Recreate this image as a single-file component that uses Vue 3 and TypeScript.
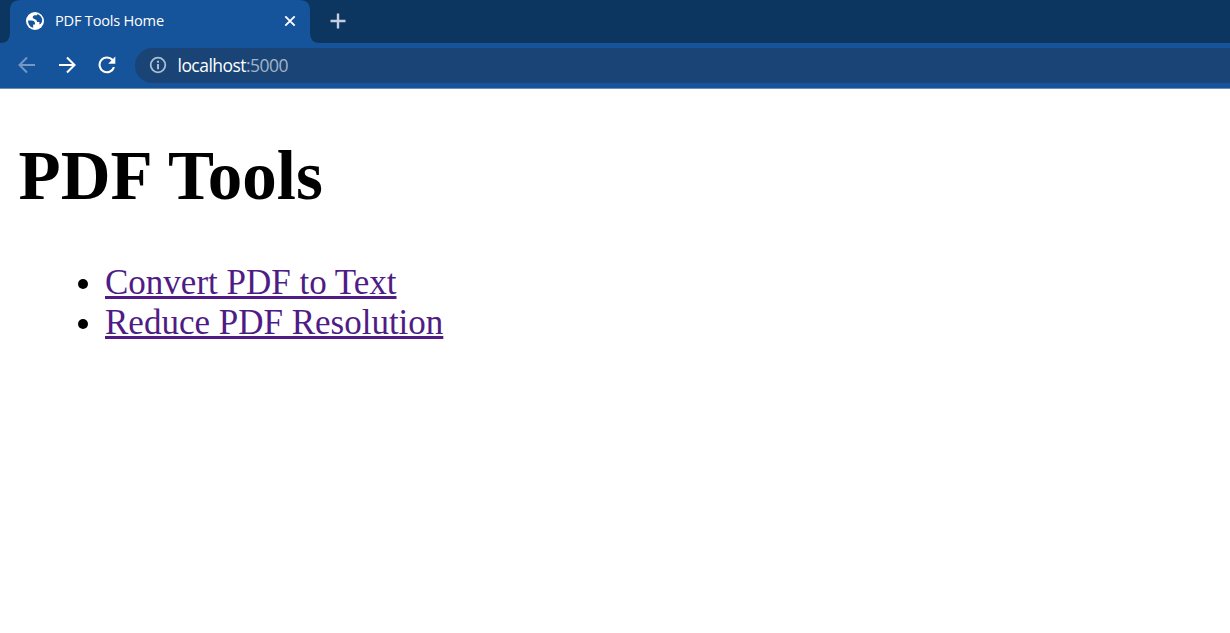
<script setup lang="ts">
interface ToolLink {
  label: string
  href: string
}

const tabTitle = 'PDF Tools Home'
const heading = 'PDF Tools'
const host = 'localhost'
const port = ':5000'

const tools: ToolLink[] = [
  { label: 'Convert PDF to Text', href: '#convert' },
  { label: 'Reduce PDF Resolution', href: '#reduce' },
]
</script>

<template>
  <div class="browser">
    <div class="tab-strip">
      <div class="left-edge"></div>
      <div class="tab">
        <svg class="globe" width="20" height="20" viewBox="0 0 20 20">
          <circle cx="10" cy="10" r="9" fill="#fff" />
          <path
            d="M3 9.4 H6.6 Q9.8 9.6 10 12.2 V13.4 H8.2 V16.8 Q3 15.4 3 9.4Z M12.2 3 V4.2 H9.6 Q7.8 4.7 7.6 6.2 Q7.8 7.9 10 8.2 Q12 8.6 12.2 11 H14.4 V13.6 Q17.6 12 17.1 8.2 Q16 4.2 12.2 3Z"
            fill="#15539a"
          />
        </svg>
        <span class="tab-title">{{ tabTitle }}</span>
        <svg class="close" width="12" height="12" viewBox="0 0 12 12">
          <path d="M1.3 1.3 10.7 10.7M10.7 1.3 1.3 10.7" stroke="#fff" stroke-width="1.9" />
        </svg>
      </div>
      <div class="strip-rest">
        <svg width="16" height="16" viewBox="0 0 16 16">
          <path d="M8 .5V15.5M.5 8H15.5" stroke="#c3cfe0" stroke-width="2.4" />
        </svg>
      </div>
    </div>

    <div class="toolbar">
      <svg class="nav" width="18" height="18" viewBox="0 0 18 18">
        <path d="M17 9H2M9 1.5 1.5 9 9 16.5" fill="none" stroke="#7398c4" stroke-width="2" />
      </svg>
      <svg class="nav" width="18" height="18" viewBox="0 0 18 18">
        <path d="M1 9H16M9 1.5 16.5 9 9 16.5" fill="none" stroke="#fff" stroke-width="2.1" />
      </svg>
      <svg class="nav reload" width="18" height="18" viewBox="0 0 18 18">
        <path d="M14.6 4A7.4 7.4 0 1 0 16 11.2" fill="none" stroke="#fff" stroke-width="2.1" />
        <path d="M17.3 .6V7.7H10.2Z" fill="#fff" />
      </svg>
      <div class="address">
        <svg class="info" width="18" height="18" viewBox="0 0 18 18">
          <circle cx="9" cy="9" r="7.3" fill="none" stroke="#adbdd0" stroke-width="1.8" />
          <path d="M9 8V13.2M9 4.8V6.7" stroke="#adbdd0" stroke-width="2" />
        </svg>
        <span class="host">{{ host }}</span><span class="port">{{ port }}</span>
      </div>
    </div>

    <main class="page">
      <h1>{{ heading }}</h1>
      <ul>
        <li v-for="tool in tools" :key="tool.href">
          <a :href="tool.href">{{ tool.label }}</a>
        </li>
      </ul>
    </main>
  </div>
</template>

<style>
body {
  margin: 0;
  overflow: hidden;
}
</style>

<style scoped>
.browser {
  display: flex;
  flex-direction: column;
  height: 633px;
  background: #fff;
}

.tab-strip {
  display: flex;
  height: 43px;
  flex: none;
  background: #15539a;
}

.left-edge {
  width: 20px;
  margin-right: -10px;
  flex: none;
  background: #0c3560;
  clip-path: path("M0 0H20Q10 0 10 10V33Q10 43 0 43Z");
}

.tab {
  display: flex;
  align-items: center;
  box-sizing: border-box;
  flex: none;
  width: 300px;
  padding: 0 14px 1px 15px;
}

.globe,
.close {
  flex: none;
}

.tab-title {
  flex: 1;
  margin: -2px 0 0 10px;
  color: #fff;
  font: 14.6px/20px "Open Sans", "Noto Sans", sans-serif;
  letter-spacing: -0.22px;
  white-space: nowrap;
}

.strip-rest {
  display: flex;
  align-items: center;
  box-sizing: border-box;
  flex: 1;
  margin-left: -10px;
  padding: 0 0 1px 29.5px;
  background: #0c3560;
  clip-path: path("M0 0H940V43H20Q10 43 10 33V10Q10 0 0 0Z");
}

.toolbar {
  display: flex;
  align-items: center;
  box-sizing: border-box;
  flex: none;
  height: 46px;
  padding-left: 18px;
  border-bottom: 1px solid #6d8db1;
  background: #15539a;
}

.nav {
  flex: none;
  margin: -1px 22px 0 0;
}

.reload {
  margin-right: 19px;
}

.address {
  display: flex;
  align-items: center;
  box-sizing: border-box;
  flex: 1;
  height: 35px;
  padding: 0 0 1px 13.5px;
  border-radius: 17.5px 0 0 17.5px;
  background: #194475;
  font: 17.5px/24px "Open Sans", "Noto Sans", sans-serif;
  letter-spacing: -0.54px;
}

.info {
  margin-right: 11px;
}

.host {
  color: #fff;
}

.port {
  color: #a3b4c8;
}

.page {
  padding: 0 17.5px;
  color: #000;
  font: 35px/40px "Liberation Serif", "Times New Roman", serif;
}

h1 {
  margin: 47px 0 47px 1px;
  font-size: 69px;
  line-height: 80px;
  word-spacing: 2px;
}

ul {
  margin: 0;
  padding-left: 87.5px;
}

a {
  color: #4f1c85;
}
</style>
